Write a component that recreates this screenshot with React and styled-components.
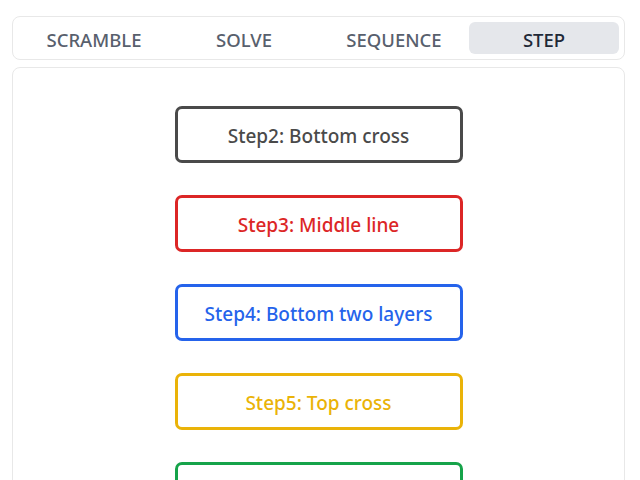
import React, { useState } from 'react';
import styled, { createGlobalStyle } from 'styled-components';

const GlobalStyle = createGlobalStyle`
  body {
    margin: 0;
    background: #ffffff;
    font-family: "Noto Sans", "Open Sans", sans-serif;
  }
`;

const tabs = ['SCRAMBLE', 'SOLVE', 'SEQUENCE', 'STEP'];

const steps = [
  { label: 'Step2: Bottom cross', color: '#4a4a4a' },
  { label: 'Step3: Middle line', color: '#dc2626' },
  { label: 'Step4: Bottom two layers', color: '#2563eb' },
  { label: 'Step5: Top cross', color: '#eab308' },
  { label: 'Step6: Top corners', color: '#16a34a' },
];

function App() {
  const [active, setActive] = useState('STEP');

  return (
    <Page>
      <GlobalStyle />
      <TabBar>
        {tabs.map((t) => (
          <Tab key={t} $active={t === active} onClick={() => setActive(t)}>
            {t}
          </Tab>
        ))}
      </TabBar>
      <Panel>
        {steps.map((s) => (
          <StepButton key={s.label} $color={s.color}>
            {s.label}
          </StepButton>
        ))}
      </Panel>
    </Page>
  );
}

const Page = styled.div`
  padding: 16px 15px 0 12px;
  display: flex;
  flex-direction: column;
  gap: 7px;
`;

const TabBar = styled.div`
  display: grid;
  grid-template-columns: repeat(4, 1fr);
  padding: 5px 5px 5px 6px;
  border: 1px solid #e8e8e8;
  border-radius: 8px;
  background: #fff;
`;

const Tab = styled.button`
  height: 32px;
  border: none;
  border-radius: 6px;
  background: ${(p) => (p.$active ? '#e5e7eb' : 'transparent')};
  color: ${(p) => (p.$active ? '#1f2937' : '#58606d')};
  font-family: "Noto Sans", "Open Sans", sans-serif;
  font-size: 18.5px;
  font-weight: 500;
  cursor: pointer;
  padding: 2px 0 0;
`;

const Panel = styled.div`
  display: flex;
  flex-direction: column;
  align-items: center;
  gap: 32px;
  padding: 38px 0 40px;
  border: 1px solid #e8e8e8;
  border-radius: 8px;
`;

const StepButton = styled.button`
  width: 288px;
  height: 57px;
  border: 3px solid ${(p) => p.$color};
  border-radius: 7px;
  background: #fff;
  color: ${(p) => p.$color};
  font-family: "Noto Sans", "Open Sans", sans-serif;
  font-size: 19px;
  font-weight: 500;
  cursor: pointer;
  padding: 2px 0 0;
`;

export default App;
